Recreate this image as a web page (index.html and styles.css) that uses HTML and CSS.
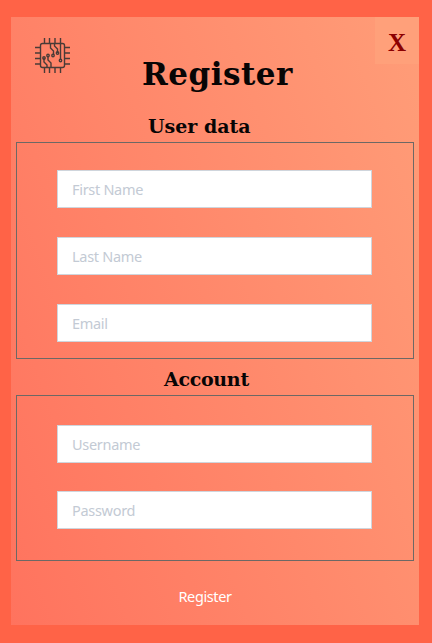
FILE: index.html
```html
<!DOCTYPE html>
<html lang="en">
<head>
<meta charset="utf-8">
<title>Register</title>
<link rel="stylesheet" href="styles.css">
</head>
<body>
<form class="card">
  <svg class="logo" viewBox="0 0 35 35" aria-hidden="true">
    <rect x="5.5" y="5.5" width="24" height="24" rx="2"/>
    <path d="M9.5 0v5M14.5 0v5M20 0v5M25.5 0v5M9.5 30v5M14.5 30v5M20 30v5M25.5 30v5M0 9.5h5M0 15h5M0 20.5h5M0 26h5M30 9.5h5M30 15h5M30 20.5h5M30 26h5"/>
    <path d="M15.500 6v4l3 3v4M19.500 6v2l3 3v4M25.500 6v16M9 20v4l3 3v2M13 18v4l3 3v4"/>
    <circle cx="18" cy="17.500" r="1.2"/><circle cx="22.500" cy="15" r="1.2"/><circle cx="25.500" cy="22.500" r="1.2"/><circle cx="9" cy="20" r="1.2"/><circle cx="13" cy="17.500" r="1.2"/>
  </svg>
  <button class="close" type="button">X</button>
  <h1 class="title">Register</h1>
  <h2 class="heading heading-user">User data</h2>
  <section class="group group-user">
    <input class="field" type="text" placeholder="First Name">
    <input class="field" type="text" placeholder="Last Name">
    <input class="field" type="text" placeholder="Email">
  </section>
  <h2 class="heading heading-account">Account</h2>
  <section class="group group-account">
    <input class="field" type="text" placeholder="Username">
    <input class="field" type="password" placeholder="Password">
  </section>
  <button class="submit" type="button">Register</button>
</form>
</body>
</html>
```

FILE: styles.css
```css
* { box-sizing: border-box; }
body {
  margin: 0;
  height: 643px;
  padding: 16.5px 13px 18px 11px;
  background: #ff6347;
  overflow: hidden;
}
.card {
  position: relative;
  height: 608.5px;
  padding: 0 5px;
  background: linear-gradient(70deg, #ff735e 0%, #ff9d78 100%);
}
.logo {
  position: absolute;
  left: 24px;
  top: 21.5px;
  width: 35px;
  height: 35px;
  fill: none;
  stroke: #493b37;
  stroke-width: 1.4;
}
.close {
  position: absolute;
  right: 0;
  top: 0;
  width: 44px;
  height: 47.5px;
  padding: 4px 0 0;
  border: 0;
  background: #ffa07a;
  color: #8b0000;
  font: bold 25px/44px "Liberation Serif", serif;
}
.title, .heading {
  margin: 0;
  color: #080505;
  font-family: "DejaVu Serif", serif;
  font-weight: bold;
  white-space: nowrap;
}
.title {
  padding: 36.5px 0 0 126px;
  height: 95.5px;
  font-size: 31px;
  letter-spacing: 0.5px;
  line-height: 42px;
}
.heading { font-size: 19px; }
.heading-user { height: 30px; padding-left: 132px; line-height: 29px; }
.heading-account { height: 36px; padding-left: 148px; letter-spacing: -0.3px; line-height: 41px; }
.group {
  display: flex;
  flex-direction: column;
  gap: 29px;
  width: 398px;
  padding: 27px 41.5px 0 40px;
  border: 1px solid #6d6865;
}
.group-user { height: 217px; }
.group-account { height: 166px; padding-top: 29px; gap: 28px; }
.field {
  flex: none;
  width: 314.500px;
  height: 38px;
  padding: 0 14px 1px;
  border: 1px solid #cfd5dc;
  background: #fff;
  color: #495057;
  font: 14.5px/20px "Noto Sans", sans-serif;
  letter-spacing: -0.3px;
}
.field::placeholder { color: #c3cad4; opacity: 1; }
.submit {
  display: block;
  margin: 23.5px 0 0 162.5px;
  padding: 0;
  border: 0;
  background: none;
  color: #fff;
  font: 14.5px/22px "Noto Sans", sans-serif;
  letter-spacing: -0.4px;
}
```
